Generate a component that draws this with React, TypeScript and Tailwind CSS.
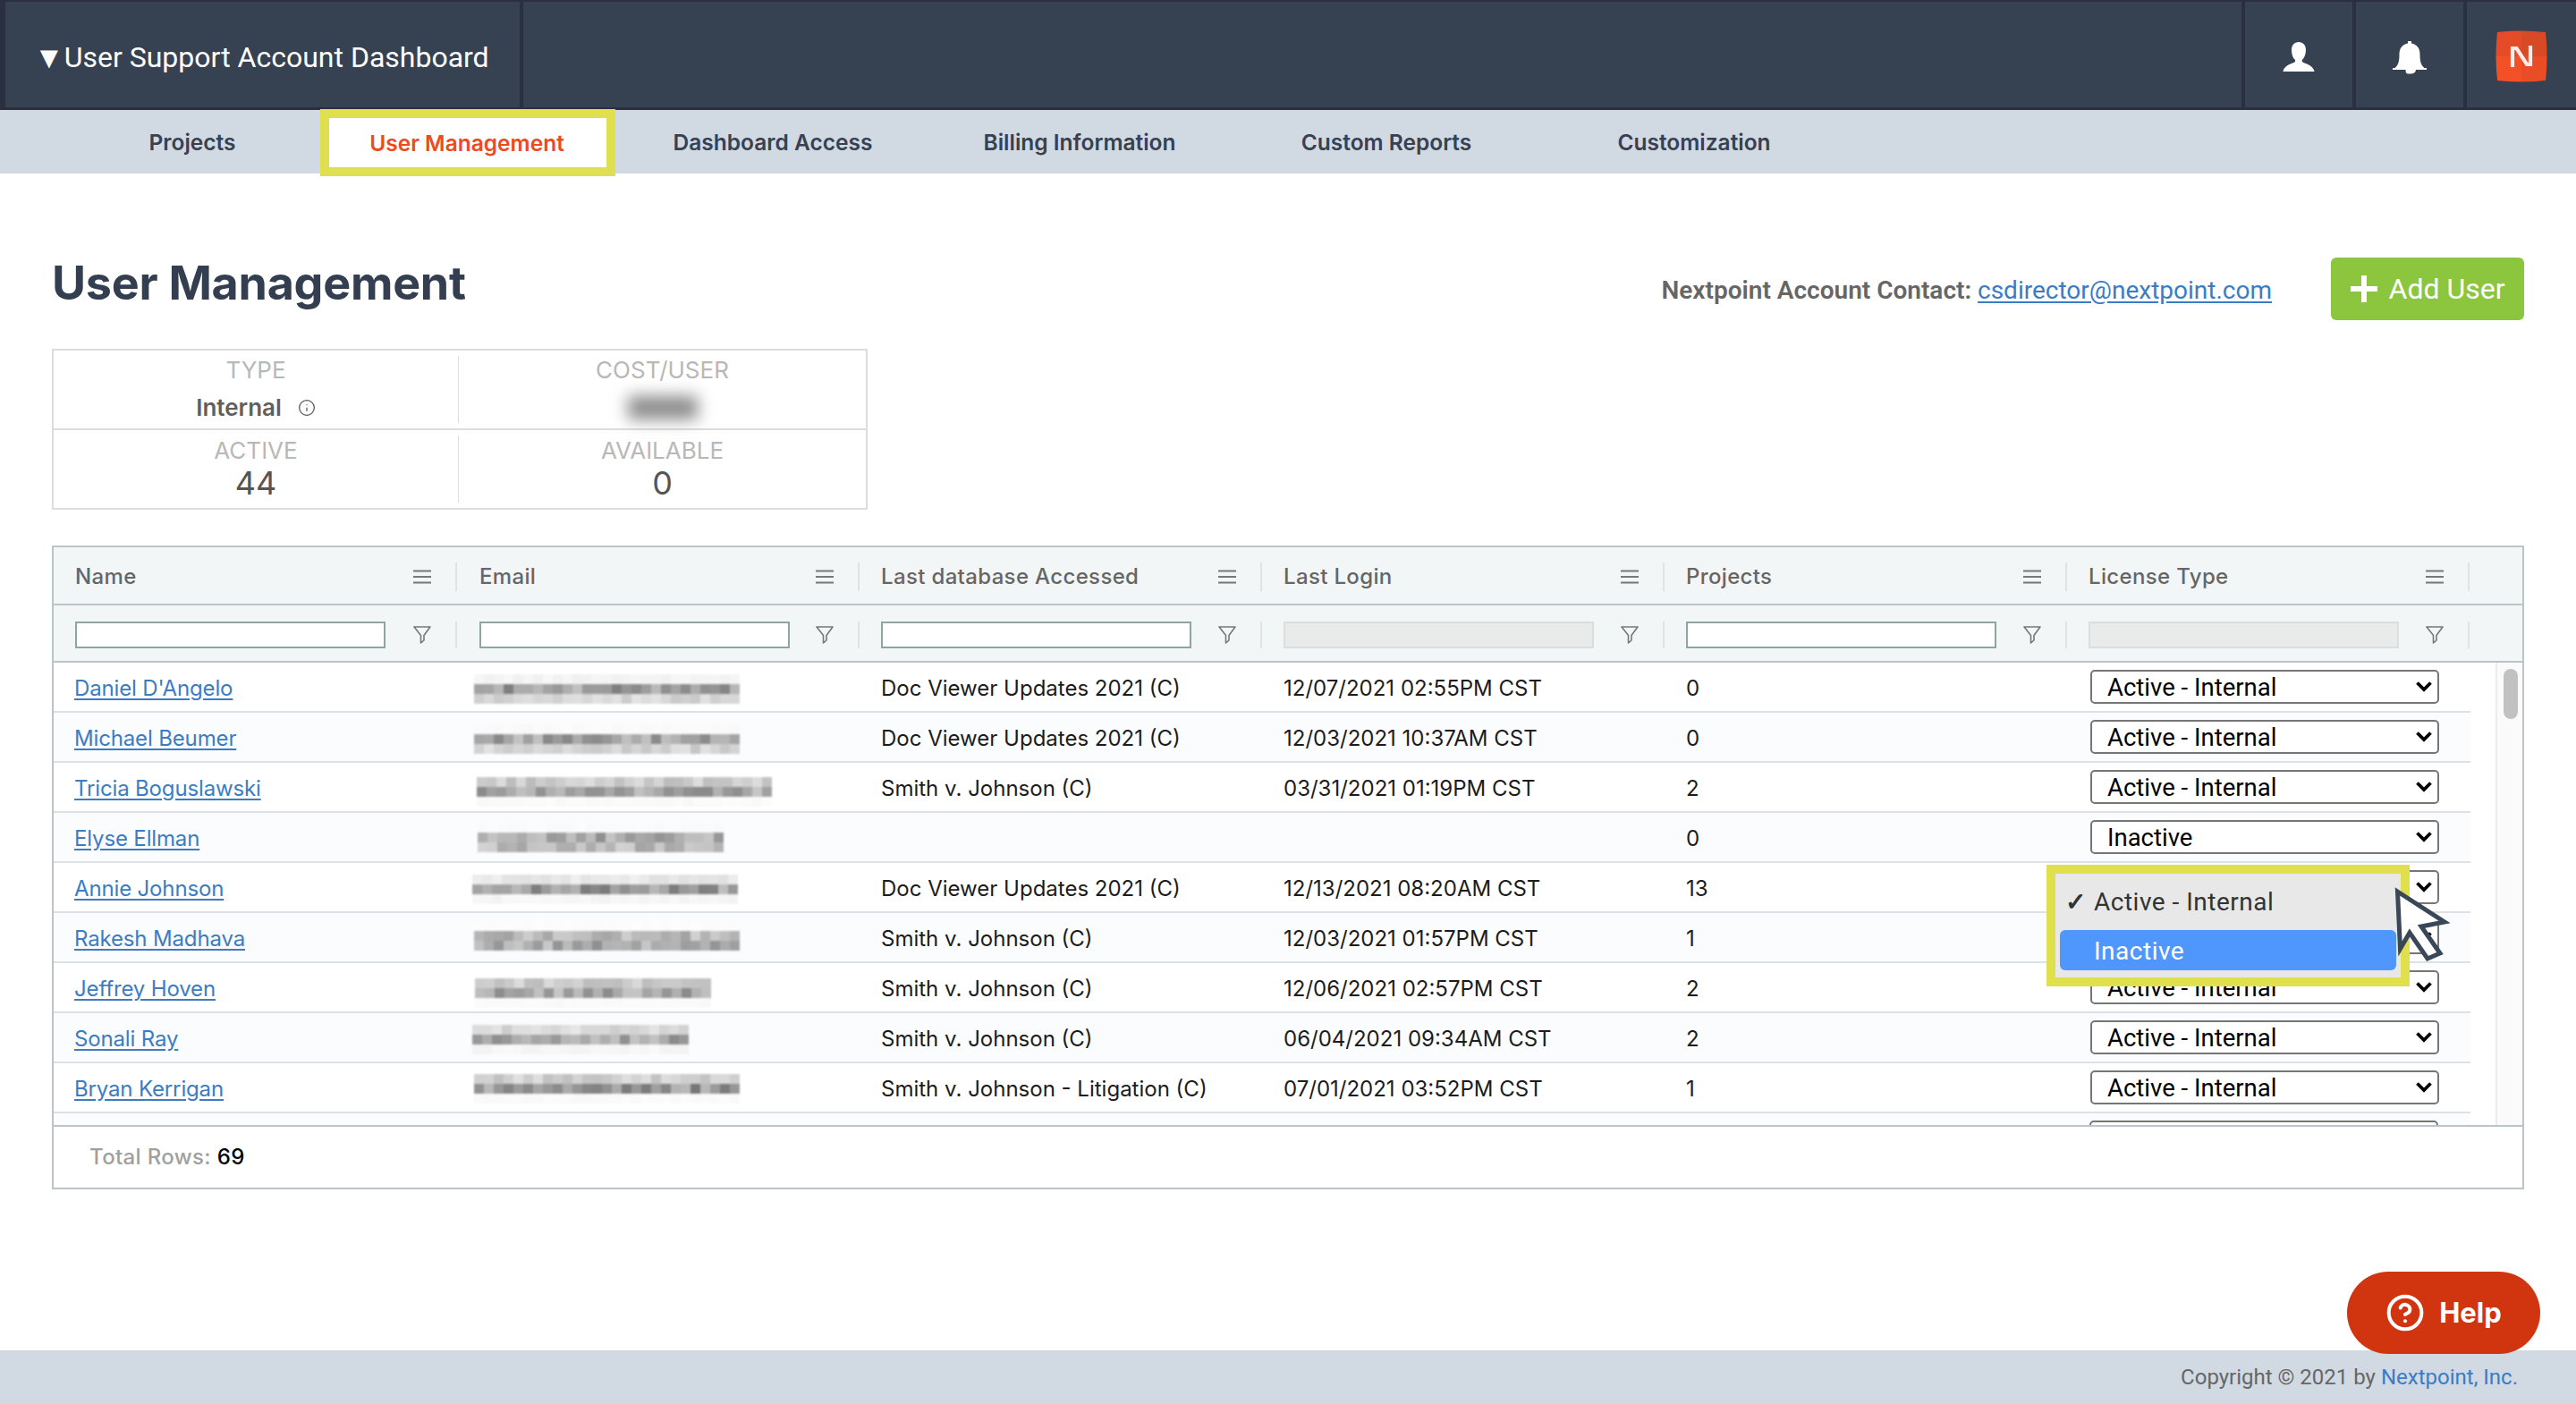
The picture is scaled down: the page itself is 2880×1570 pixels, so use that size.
import { CircleHelp, Info } from 'lucide-react'

interface Usuario { nome: string; db: string; login: string; projetos: string; licenca: string }

const USUARIOS: Usuario[] = [
  { nome: "Daniel D'Angelo", db: 'Doc Viewer Updates 2021 (C)', login: '12/07/2021 02:55PM CST', projetos: '0', licenca: 'Active - Internal' },
  { nome: 'Michael Beumer', db: 'Doc Viewer Updates 2021 (C)', login: '12/03/2021 10:37AM CST', projetos: '0', licenca: 'Active - Internal' },
  { nome: 'Tricia Boguslawski', db: 'Smith v. Johnson (C)', login: '03/31/2021 01:19PM CST', projetos: '2', licenca: 'Active - Internal' },
  { nome: 'Elyse Ellman', db: '', login: '', projetos: '0', licenca: 'Inactive' },
  { nome: 'Annie Johnson', db: 'Doc Viewer Updates 2021 (C)', login: '12/13/2021 08:20AM CST', projetos: '13', licenca: 'Active - Internal' },
  { nome: 'Rakesh Madhava', db: 'Smith v. Johnson (C)', login: '12/03/2021 01:57PM CST', projetos: '1', licenca: 'Active - Internal' },
  { nome: 'Jeffrey Hoven', db: 'Smith v. Johnson (C)', login: '12/06/2021 02:57PM CST', projetos: '2', licenca: 'Active - Internal' },
  { nome: 'Sonali Ray', db: 'Smith v. Johnson (C)', login: '06/04/2021 09:34AM CST', projetos: '2', licenca: 'Active - Internal' },
  { nome: 'Bryan Kerrigan', db: 'Smith v. Johnson - Litigation (C)', login: '07/01/2021 03:52PM CST', projetos: '1', licenca: 'Active - Internal' },
]

// mosaic of the hidden e-mails: x offset in the cell, columns, top offset, gray of each band
const MOSAICOS: { x: number; cols: number; y: number; faixas: number[] }[] = [
  { x: 19, cols: 27, y: 13, faixas: [244, 160, 212] },
  { x: 19, cols: 27, y: 13, faixas: [250, 165, 212] },
  { x: 22, cols: 30, y: 16, faixas: [205, 168, 250] },
  { x: 23, cols: 25, y: 11, faixas: [251, 170, 188] },
  { x: 17, cols: 27, y: 13, faixas: [232, 155, 246] },
  { x: 19, cols: 27, y: 9, faixas: [252, 186, 172] },
  { x: 20, cols: 24, y: 17, faixas: [205, 168, 250] },
  { x: 17, cols: 22, y: 13, faixas: [218, 162, 246] },
  { x: 19, cols: 27, y: 12, faixas: [208, 152, 250] },
]

const COLUNAS = ['Name', 'Email', 'Last database Accessed', 'Last Login', 'Projects', 'License Type']

function ruido(a: number, b: number) {
  const s = Math.sin(a * 12.9898 + b * 78.233) * 43758.5453
  return s - Math.floor(s)
}

function Mosaico({ linha }: { linha: number }) {
  const m = MOSAICOS[linha]
  return (
    <svg width="400" height="54" className="block blur-[0.8px]">
      {m.faixas.map((cinza, f) =>
        Array.from({ length: m.cols }).map((_, c) => {
          const variacao = (ruido(linha + f * 7 + 1, c + 1) - 0.5) * (255 - cinza) * 0.7
          const v = Math.min(255, Math.round(cinza + variacao))
          return <rect key={`${f}-${c}`} x={m.x + c * 11} y={m.y + f * 11} width="11" height="11" fill={`rgb(${v},${v},${v + 1})`} />
        })
      )}
    </svg>
  )
}

function IconeMenu() {
  return (
    <svg width="20" height="16" viewBox="0 0 20 16" fill="none" stroke="#777" strokeWidth="2" className="shrink-0">
      <path d="M0 1.5h20M0 8h20M0 14.5h20" />
    </svg>
  )
}

function IconeFunil() {
  return (
    <svg width="20" height="20" viewBox="0 0 20 20" fill="none" stroke="#777" strokeWidth="1.6" className="shrink-0">
      <path d="M1 1h18L12 10.5V16l-3.5 3V10.5z" strokeLinejoin="round" />
    </svg>
  )
}

function Chevron() {
  return (
    <svg width="18" height="13" viewBox="0 0 18 13" fill="none" stroke="#000" strokeWidth="3.8" className="absolute right-[8px] top-[12px] pointer-events-none">
      <path d="M1.5 2.500L9 10l7.500-7.500" />
    </svg>
  )
}

function SelectLicenca({ valor }: { valor: string }) {
  return (
    <div className="relative w-[390px] h-[38px] shrink-0">
      <select
        defaultValue={valor}
        className="appearance-none w-full h-full bg-white border-2 border-[#767676] rounded-[5px] pl-[17px] pt-[2px] text-[27.5px] leading-none text-black font-['Roboto',sans-serif] outline-none"
      >
        <option>Active - Internal</option>
        <option>Inactive</option>
      </select>
      <Chevron />
    </div>
  )
}

function Abas() {
  return (
    <nav className="h-[71px] bg-[#d1d9e3] flex pl-[72px] text-[24.5px] font-semibold text-[#374151] shrink-0">
      <div className="w-[286px] pt-[2px] flex items-center justify-center">Projects</div>
      <div className="w-[330px] h-[75px] -mt-px relative z-10 border-[10px] border-[#e0e04e] bg-white pt-[2px] pr-[2px] flex items-center justify-center text-[#ee4a1f]">User Management</div>
      <div className="w-[352px] pt-[2px] flex items-center justify-center">Dashboard Access</div>
      <div className="w-[334px] pt-[2px] flex items-center justify-center">Billing Information</div>
      <div className="w-[352px] pt-[2px] flex items-center justify-center">Custom Reports</div>
      <div className="w-[336px] pt-[2px] flex items-center justify-center">Customization</div>
    </nav>
  )
}

function Cabecalho() {
  return (
    <header className="h-[123px] bg-[#2a3040] pt-[2px] pb-[3px] flex gap-[4px] shrink-0">
      <div className="w-[575px] ml-[6px] bg-[#364152] flex items-center pl-[32px] pt-[6px] text-white text-[32px] font-['Roboto',sans-serif]">
        <span className="text-[34px] leading-none">▼</span>User Support Account Dashboard
      </div>
      <div className="flex-1 bg-[#364152]" />
      <div className="w-[120px] pt-[6px] bg-[#364152] flex items-center justify-center">
        <svg width="36" height="36" viewBox="0 0 36 36" fill="#fff">
          <path d="M18 1c5 0 8 3.600 8 9 0 5-2 9-4.200 11v2c2 2 12 3 13.800 11H.4C2 26 12 25 14 23v-2c-2.400-2-4-6-4-11 0-5.400 3-9 8-9z" />
        </svg>
      </div>
      <div className="w-[120px] pt-[6px] bg-[#364152] flex items-center justify-center">
        <svg width="38" height="38" viewBox="0 0 38 38" fill="#fff">
          <path d="M17 1h4v2.500c6 1 9.500 5.500 9.500 12 0 8 1 12 5 15.500H38v2H26c-.4 3-2 4.500-7 4.500s-4-1.500-4.500-4.500H0v-2h2.500c4-3.500 5-7.500 5-15.500 0-6.500 3.500-11 9.500-12z" />
        </svg>
      </div>
      <div className="w-[122px] pt-[3px] bg-[#364152] flex items-center justify-center">
        <svg width="60" height="60" viewBox="0 0 60 60">
          <defs>
            <clipPath id="logo">
              <path d="M3 3Q30 0 57 3Q60 30 57 57Q30 60 3 57Q0 30 3 3z" />
            </clipPath>
          </defs>
          <g clipPath="url(#logo)">
            <rect width="30" height="30" fill="#e54b26" />
            <rect x="30" width="30" height="30" fill="#d84a26" />
            <rect y="30" width="30" height="30" fill="#f35027" />
            <rect x="30" y="30" width="30" height="30" fill="#e84d26" />
          </g>
          <path d="M20 42V21h4.500l11.500 18h4V18" fill="none" stroke="#fff" strokeWidth="4.200" strokeOpacity="0.9" />
        </svg>
      </div>
    </header>
  )
}

function Resumo() {
  const rotulo = 'text-[26px] leading-none text-[#b8b8b8]'
  return (
    <div className="w-[912px] h-[180px] mt-[33px] ml-[58px] border-2 border-[#dddddd] flex flex-col">
      <div className="h-[89px] flex border-b-2 border-[#dddddd] py-[6px]">
        <div className="w-[453px] border-r border-[#dddddd] flex flex-col items-center pt-[3px]">
          <div className={rotulo}>TYPE</div>
          <div className="mt-[16px] flex items-center text-[26px] leading-none font-semibold text-[#5f5f5f]">
            Internal
            <Info size={20} strokeWidth={1.5} className="ml-[18px] text-[#555]" />
          </div>
        </div>
        <div className="flex-1 flex flex-col items-center pt-[3px]">
          <div className={rotulo}>COST/USER</div>
          <div className="mt-[16px] w-[78px] h-[26px] bg-[#8a8a8a] blur-[9px]" />
        </div>
      </div>
      <div className="flex-1 flex py-[6px]">
        <div className="w-[453px] border-r border-[#dddddd] flex flex-col items-center pt-[4px]">
          <div className={rotulo}>ACTIVE</div>
          <div className="mt-[5px] text-[36px] leading-none text-[#555]">44</div>
        </div>
        <div className="flex-1 flex flex-col items-center pt-[4px]">
          <div className={rotulo}>AVAILABLE</div>
          <div className="mt-[5px] text-[36px] leading-none text-[#555]">0</div>
        </div>
      </div>
    </div>
  )
}

function Tabela() {
  const larguras = ['w-[451px] pl-[24px]', 'w-[450px] pl-[25px]', 'w-[450px] pl-[24px]', 'w-[450px] pl-[24px]', 'w-[450px] pl-[24px]', 'w-[450px] pl-[24px]']
  return (
    <div className="w-[2764px] h-[720px] mt-[40px] ml-[58px] border-2 border-[#bcc3c9] flex flex-col">
      <div className="h-[65px] pt-[3px] bg-[#f3f6f7] border-b-2 border-[#bcc3c9] flex items-center shrink-0 text-[24px] font-medium text-[#666] tracking-[0.35px]">
        {COLUNAS.map((c, i) => (
          <div key={c} className={`${larguras[i]} h-[32px] flex items-center justify-between pr-[27px] border-r-2 border-[#e0e3e5] shrink-0`}>
            <span>{c}</span>
            <IconeMenu />
          </div>
        ))}
      </div>
      <div className="h-[64px] pt-[3px] bg-[#f3f6f7] border-b-2 border-[#bcc3c9] flex items-center shrink-0">
        {COLUNAS.map((c, i) => {
          const desativado = i === 3 || i === 5
          return (
            <div key={c} className={`${larguras[i]} h-[30px] flex items-center justify-between pr-[27px] border-r-2 border-[#e0e3e5] shrink-0`}>
              <input
                disabled={desativado}
                className={desativado
                  ? 'w-[347px] h-[30px] bg-[#e9eaea] border-2 border-[#dcdedd]'
                  : 'w-[347px] h-[30px] bg-white border-2 border-[#8fa5a1]'}
              />
              <IconeFunil />
            </div>
          )
        })}
      </div>
      <div className="flex-1 flex overflow-hidden">
        <div className="w-[2702px] shrink-0">
          {USUARIOS.map((u, i) => (
            <div key={u.nome} className={`h-[56px] flex items-center border-b-2 border-[#dde0e4] text-[24px] text-[#1c1c1c] ${i % 2 ? 'bg-[#fbfcfe]' : 'bg-white'}`}>
              <div className="w-[451px] pl-[23px] pt-[4px] shrink-0 tracking-[-0.15px]">
                <a href="#" className="text-[#3b7cc4] underline underline-offset-[3px]">{u.nome}</a>
              </div>
              <div className="w-[450px] shrink-0 overflow-hidden">
                <Mosaico linha={i} />
              </div>
              <div className="w-[450px] pl-[24px] pt-[4px] shrink-0">{u.db}</div>
              <div className="w-[450px] pl-[24px] pt-[4px] shrink-0">{u.login}</div>
              <div className="w-[450px] pl-[24px] pt-[4px] shrink-0">{u.projetos}</div>
              <div className="w-[450px] pl-[26px] shrink-0"><SelectLicenca valor={u.licenca} /></div>
            </div>
          ))}
          <div className="h-[60px] bg-[#fbfcfe] pl-[2276px] pt-[8px] flex">
            <div className="w-[390px] h-[38px] bg-white border-2 border-[#767676] rounded-[5px]" />
          </div>
        </div>
        <div className="flex-1 ml-[28px] bg-[#fafafa] border-l-2 border-[#ececec] pl-[7px] pt-[7px]">
          <div className="w-[16px] h-[56px] rounded-full bg-[#c1c1c1]" />
        </div>
      </div>
      <div className="h-[70px] border-t-2 border-[#bcc3c9] flex items-center pl-[40px] text-[24px] font-medium tracking-[0.35px] text-[#a0a0a0] shrink-0">
        Total Rows:&nbsp;<span className="text-black">69</span>
      </div>
    </div>
  )
}

export default function App() {
  return (
    <div className="relative w-[2880px] h-[1570px] overflow-hidden bg-white flex flex-col font-['Inter',sans-serif]">
      <Cabecalho />
      <Abas />

      <main className="flex-1 flex flex-col">
        <div className="h-[163px] flex items-start justify-between px-[58px] pt-[91px] shrink-0">
          <h1 className="text-[52px] leading-[64px] font-bold text-[#333f50] tracking-[-0.25px]">User Management</h1>
          <div className="flex items-start mt-[3px]">
            <div className="mt-[19px] text-[28px] leading-[36px] font-semibold text-[#666] font-['Roboto',sans-serif]">
              Nextpoint Account Contact:{' '}
              <a href="#" className="font-normal text-[#3b7cc4] underline underline-offset-[3px]">csdirector@nextpoint.com</a>
            </div>
            <button className="ml-[66px] w-[216px] h-[70px] rounded-[6px] bg-[#8cc63f] text-white text-[32px] font-['Roboto',sans-serif] flex items-center justify-center gap-[13px]">
              <svg width="30" height="30" viewBox="0 0 30 30" fill="#fff"><path d="M12 0h6v12h12v6H18v12h-6V18H0v-6h12z" /></svg>
              Add User
            </button>
          </div>
        </div>
        <Resumo />
        <Tabela />
      </main>

      <footer className="h-[60px] bg-[#d1d9e3] flex items-center justify-end pr-[65px] text-[24px] text-[#666] font-['Roboto',sans-serif] shrink-0">
        Copyright © 2021 by&nbsp;<a href="#" className="text-[#3b7cc4]">Nextpoint, Inc.</a>
      </footer>

      {/* opened select popup */}
      <div className="absolute left-[2288px] top-[967px] w-[406px] h-[136px] border-[10px] border-[#e0e04e] bg-[#e8e8e8] z-20 font-['Roboto',sans-serif] text-[28px] tracking-[0.5px]">
        <div className="h-[63px] flex items-center text-[#333]">
          <span className="w-[43px] pl-[11px] text-[28px] leading-none font-bold">✓</span>Active - Internal
        </div>
        <div className="mx-[5px] h-[45px] pt-[2px] rounded-[6px] bg-[#4f97fd] text-white flex items-center pl-[38px]">Inactive</div>
      </div>

      {/* mouse pointer */}
      <svg width="75" height="95" viewBox="2670 985 75 95" fill="#fff" stroke="#3a4757" strokeWidth="5" className="absolute left-[2670px] top-[985px] z-30">
        <path d="M2680.500 997L2733 1031L2707 1036L2728 1066L2714 1072L2694 1043L2683.500 1061z" strokeLinejoin="miter" />
      </svg>

      <button className="absolute left-[2624px] top-[1422px] w-[216px] h-[92px] rounded-full bg-[#d1350f] text-white text-[31px] font-bold flex items-center justify-center gap-[16px] z-20">
        <CircleHelp size={44} strokeWidth={2.2} />
        Help
      </button>
    </div>
  )
}
